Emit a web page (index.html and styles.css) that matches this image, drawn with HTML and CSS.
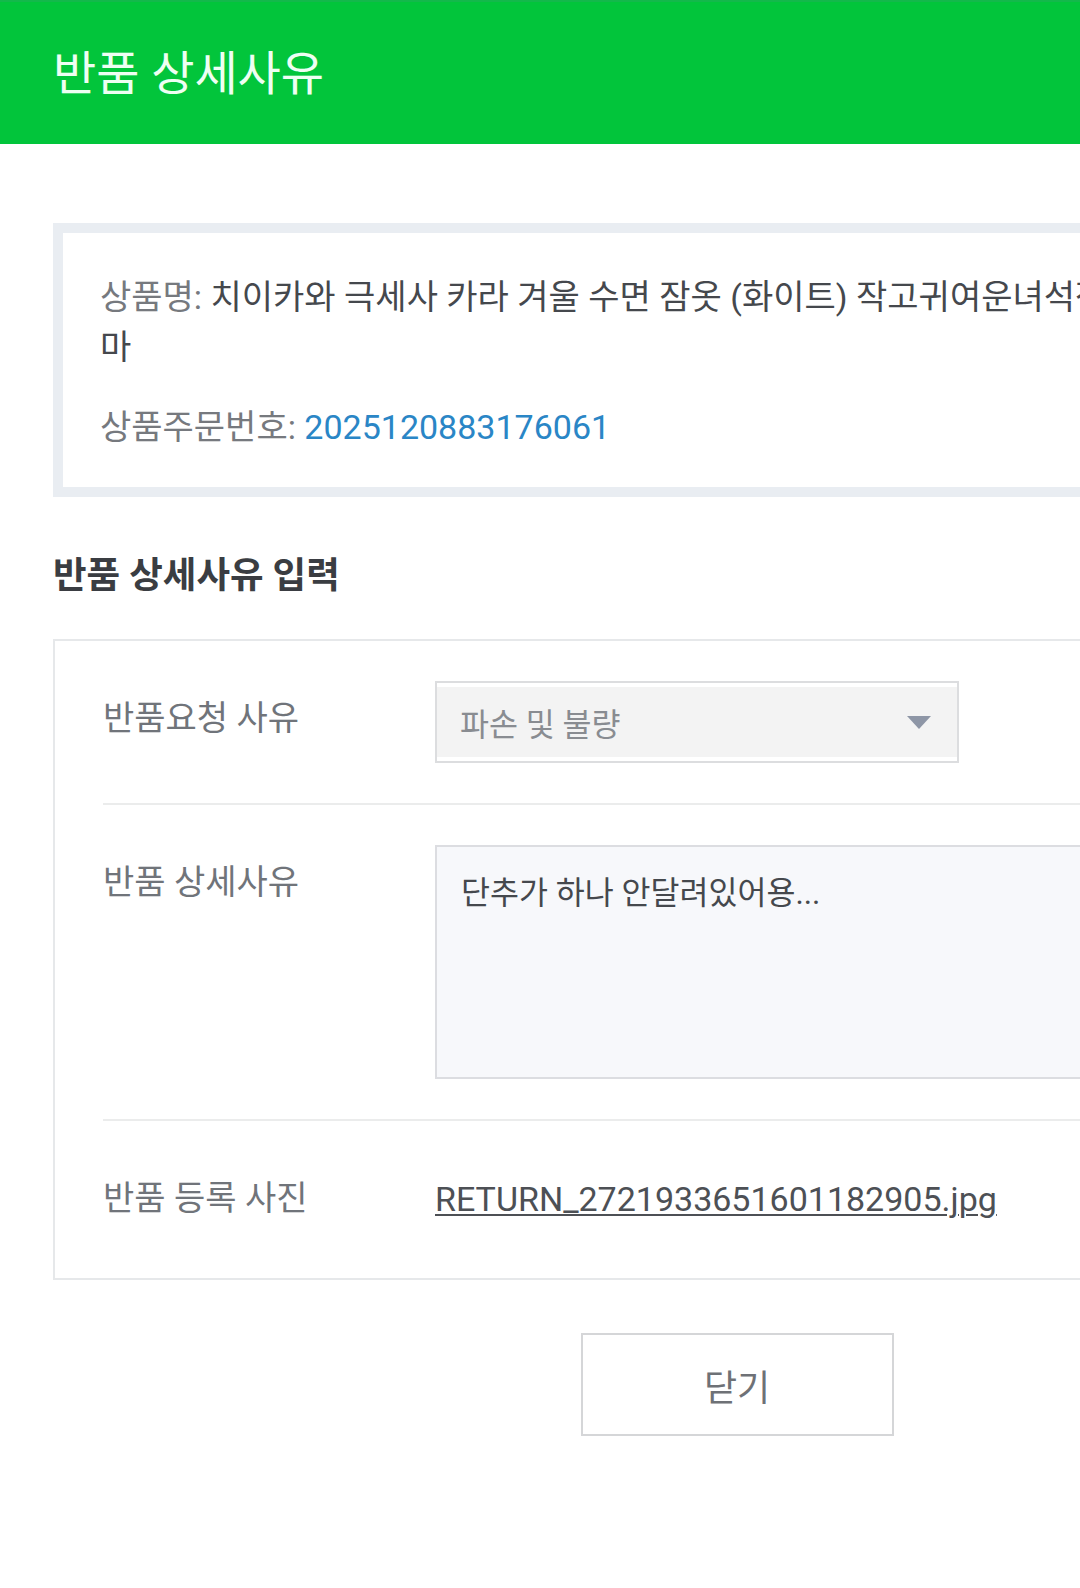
FILE: index.html
```html
<!DOCTYPE html>
<html lang="ko">
<head>
<meta charset="utf-8">
<title>반품 상세사유</title>
<link rel="stylesheet" href="styles.css">
</head>
<body>
<header class="header">
  <h1 class="header-title">반품 상세사유</h1>
</header>
<main class="page">
  <section class="info">
    <p class="info-line"><span class="info-label">상품명:</span> <span class="info-value">치이카와 극세사 카라 겨울 수면 잠옷 (화이트) 작고귀여운녀석잠옷세트 겨울용파자마</span></p>
    <p class="info-line info-line-order"><span class="info-label">상품주문번호:</span> <span class="info-number">2025120883176061</span></p>
  </section>

  <h2 class="section-title">반품 상세사유 입력</h2>

  <section class="form">
    <div class="row">
      <div class="row-label">반품요청 사유</div>
      <div class="row-field">
        <div class="select">
          <div class="select-inner">
            <span class="select-text">파손 및 불량</span>
            <span class="select-arrow"></span>
          </div>
        </div>
      </div>
    </div>
    <div class="row">
      <div class="row-label">반품 상세사유</div>
      <div class="row-field">
        <div class="textarea">단추가 하나 안달려있어용...</div>
      </div>
    </div>
    <div class="row row-last">
      <div class="row-label">반품 등록 사진</div>
      <div class="row-field">
        <a class="file-link" href="#">RETURN_2721933651601182905.jpg</a>
      </div>
    </div>
  </section>

  <div class="actions">
    <button class="btn-close" type="button">닫기</button>
  </div>
</main>
</body>
</html>
```

FILE: styles.css
```css
html, body {
  margin: 0;
  padding: 0;
  overflow-x: hidden;
  background: #ffffff;
}

body {
  font-family: Roboto, "Noto Sans CJK KR", sans-serif;
  color: #44474c;
}

.header {
  height: 144px;
  background: #02c53b;
  display: flex;
  align-items: center;
  padding-left: 53px;
  border-top: 2px solid #13b94b;
  box-sizing: border-box;
}

.header-title {
  margin: 0;
  font-size: 47px;
  font-weight: 400;
  color: #eefff3;
  line-height: 1;
}

.page {
  width: 1368px;
  padding: 79px 53px 120px;
}

.info {
  border: 10px solid #e9edf2;
  padding: 39px 37px 35px;
}

.info-line {
  margin: 0;
  font-size: 34px;
  line-height: 50px;
}

.info-line-order {
  margin-top: 30px;
}

.info-label {
  color: #76797e;
}

.info-value {
  color: #45484d;
}

.info-number {
  color: #2a86c6;
}

.section-title {
  margin: 55px 0 39px;
  font-size: 36.5px;
  font-weight: 700;
  line-height: 48px;
  color: #3a3d42;
}

.form {
  border: 2px solid #e6e8ea;
  padding: 0 48px;
}

.row {
  display: flex;
  padding: 40px 0;
  border-bottom: 2px solid #ebecec;
}

.row-last {
  border-bottom: none;
  padding-bottom: 55px;
}

.row-label {
  width: 332px;
  flex: none;
  padding-top: 13px;
  font-size: 34px;
  line-height: 48px;
  color: #70747a;
}

.row-field {
  flex: 1;
  min-width: 0;
}

.select {
  width: 524px;
  height: 82px;
  box-sizing: border-box;
  border: 2px solid #dcdddf;
  background: #ffffff;
  padding: 4px 0;
}

.select-inner {
  height: 70px;
  background: #f3f3f3;
  display: flex;
  align-items: center;
  justify-content: space-between;
  padding: 0 26px 0 23px;
}

.select-text {
  font-size: 31.5px;
  color: #898c91;
}

.select-arrow {
  width: 0;
  height: 0;
  border-left: 12.5px solid transparent;
  border-right: 12.5px solid transparent;
  border-top: 13px solid #8e96a6;
}

.textarea {
  height: 234px;
  box-sizing: border-box;
  border: 2px solid #dcdde1;
  background: #f7f8fb;
  padding: 24px 24px;
  font-size: 31.5px;
  line-height: 45px;
  color: #45484d;
}

.file-link {
  display: inline-block;
  padding-top: 14px;
  font-size: 34px;
  line-height: 48px;
  color: #4d5055;
  text-decoration: underline;
  text-decoration-thickness: 2px;
  text-underline-offset: 3px;
}

.actions {
  display: flex;
  justify-content: center;
  margin-top: 53px;
}

.btn-close {
  width: 313px;
  height: 103px;
  border: 2px solid #d5d6d8;
  background: #ffffff;
  font-family: Roboto, "Noto Sans CJK KR", sans-serif;
  font-size: 36px;
  color: #6e7176;
  padding: 0;
}
```
